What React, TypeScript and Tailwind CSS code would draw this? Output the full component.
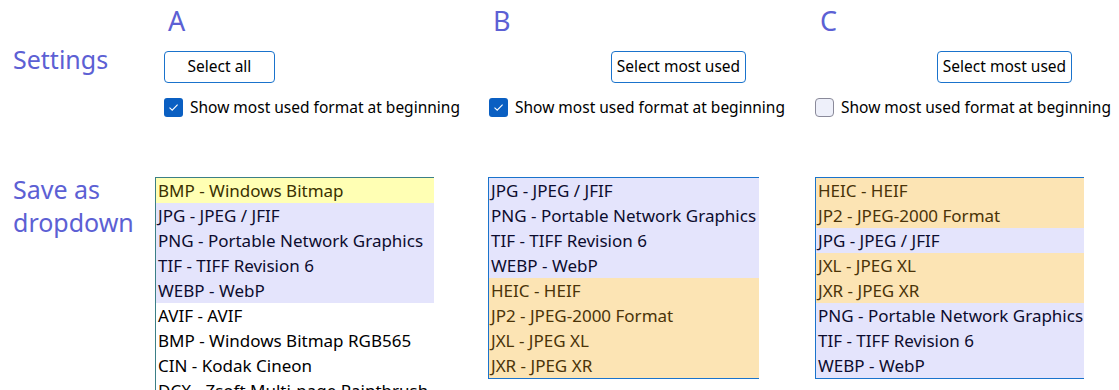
import React from 'react';

type Row = { label: string; kind: 'yellow' | 'blue' | 'orange' | 'plain' };

const listA: Row[] = [
  { label: 'BMP - Windows Bitmap', kind: 'yellow' },
  { label: 'JPG - JPEG / JFIF', kind: 'blue' },
  { label: 'PNG - Portable Network Graphics', kind: 'blue' },
  { label: 'TIF - TIFF Revision 6', kind: 'blue' },
  { label: 'WEBP - WebP', kind: 'blue' },
  { label: 'AVIF - AVIF', kind: 'plain' },
  { label: 'BMP - Windows Bitmap RGB565', kind: 'plain' },
  { label: 'CIN - Kodak Cineon', kind: 'plain' },
  { label: 'DCX - Zsoft Multi-page Paintbrush', kind: 'plain' },
];

const listB: Row[] = [
  { label: 'JPG - JPEG / JFIF', kind: 'blue' },
  { label: 'PNG - Portable Network Graphics', kind: 'blue' },
  { label: 'TIF - TIFF Revision 6', kind: 'blue' },
  { label: 'WEBP - WebP', kind: 'blue' },
  { label: 'HEIC - HEIF', kind: 'orange' },
  { label: 'JP2 - JPEG-2000 Format', kind: 'orange' },
  { label: 'JXL - JPEG XL', kind: 'orange' },
  { label: 'JXR - JPEG XR', kind: 'orange' },
];

const listC: Row[] = [
  { label: 'HEIC - HEIF', kind: 'orange' },
  { label: 'JP2 - JPEG-2000 Format', kind: 'orange' },
  { label: 'JPG - JPEG / JFIF', kind: 'blue' },
  { label: 'JXL - JPEG XL', kind: 'orange' },
  { label: 'JXR - JPEG XR', kind: 'orange' },
  { label: 'PNG - Portable Network Graphics', kind: 'blue' },
  { label: 'TIF - TIFF Revision 6', kind: 'blue' },
  { label: 'WEBP - WebP', kind: 'blue' },
];

const rowClass: Record<Row['kind'], string> = {
  yellow: 'bg-[#ffffb4] text-[#3a3000]',
  blue: 'bg-[#e4e4fc] text-[#0c0c2e]',
  orange: 'bg-[#fce4b4] text-[#4a3308]',
  plain: 'bg-white text-black',
};

function Check({ checked }: { checked: boolean }) {
  return checked ? (
    <span className="flex h-[19px] w-[19px] shrink-0 items-center justify-center rounded-[3px] bg-[#0a5fc2]">
      <svg width="11" height="9" viewBox="0 0 11 9" fill="none">
        <path d="M1.5 4.6 L4.2 7.2 L9.6 1.6" stroke="white" strokeWidth="1.1" />
      </svg>
    </span>
  ) : (
    <span className="h-[19px] w-[19px] shrink-0 rounded-[4px] border border-[#8a8a9a] bg-[#eef0fa]" />
  );
}

function Options({ rows, border }: { rows: Row[]; border: string }) {
  return (
    <div className={`border-t border-l border-b ${border}`}>
      {rows.map((r, i) => (
        <div key={i} className={`h-[25px] whitespace-nowrap overflow-hidden pl-[2px] leading-[25px] ${rowClass[r.kind]}`}>
          {r.label}
        </div>
      ))}
    </div>
  );
}

export default function App() {
  return (
    <div className="h-[390px] w-[1119px] overflow-hidden bg-white font-['Noto_Sans',sans-serif] text-black">
      {/* letters */}
      <div className="flex h-[43px] items-end text-[27px] leading-none text-[#5c60d4]">
        <div className="w-[155px] shrink-0" />
        <div className="w-[333px] shrink-0 pl-[13px] pb-[9px]">A</div>
        <div className="w-[327px] shrink-0 pl-[5px] pb-[9px]">B</div>
        <div className="shrink-0 pl-[5px] pb-[9px]">C</div>
      </div>

      {/* settings */}
      <div className="flex h-[130px]">
        <div className="w-[155px] shrink-0 pl-[13px] pt-[4px] text-[25px] leading-none text-[#5c60d4]">Settings</div>
        <div className="flex w-[333px] shrink-0 flex-col items-start pl-[9px] pt-[8px]">
          <button className="h-[32px] w-[111px] rounded-[4px] border border-[#1a73cc] bg-white text-[15.5px]">Select all</button>
          <label className="mt-[13px] flex items-center gap-[7px] whitespace-nowrap text-[15.5px]">
            <Check checked />
            Show most used format at beginning
          </label>
        </div>
        <div className="flex w-[327px] shrink-0 flex-col pt-[8px]">
          <div className="flex w-[271px] justify-end pr-[13px]">
            <button className="h-[32px] w-[135px] rounded-[4px] border border-[#1a73cc] bg-white text-[15.5px]">Select most used</button>
          </div>
          <label className="mt-[13px] flex items-center gap-[7px] whitespace-nowrap pl-[1px] text-[15.5px]">
            <Check checked />
            Show most used format at beginning
          </label>
        </div>
        <div className="flex shrink-0 flex-col pt-[8px]">
          <div className="flex w-[269px] justify-end pr-[12px]">
            <button className="h-[32px] w-[135px] rounded-[4px] border border-[#1a73cc] bg-white text-[15.5px]">Select most used</button>
          </div>
          <label className="mt-[13px] flex items-center gap-[7px] whitespace-nowrap text-[15.5px]">
            <Check checked={false} />
            Show most used format at beginning
          </label>
        </div>
      </div>

      {/* dropdown lists */}
      <div className="flex pt-[4px]">
        <div className="-mt-[4px] w-[155px] shrink-0 pl-[13px] text-[25px] leading-[33px] text-[#5c60d4]">
          Save as
          <br />
          dropdown
        </div>
        <div className="w-[333px] shrink-0">
          <div className="w-[279px] text-[17px]">
            <Options rows={listA} border="border-[#3b7f86]" />
          </div>
        </div>
        <div className="w-[327px] shrink-0">
          <div className="w-[271px] text-[17px]">
            <Options rows={listB} border="border-[#1a73cc]" />
          </div>
        </div>
        <div className="shrink-0">
          <div className="w-[269px] text-[17px]">
            <Options rows={listC} border="border-[#1a73cc]" />
          </div>
        </div>
      </div>
    </div>
  );
}
